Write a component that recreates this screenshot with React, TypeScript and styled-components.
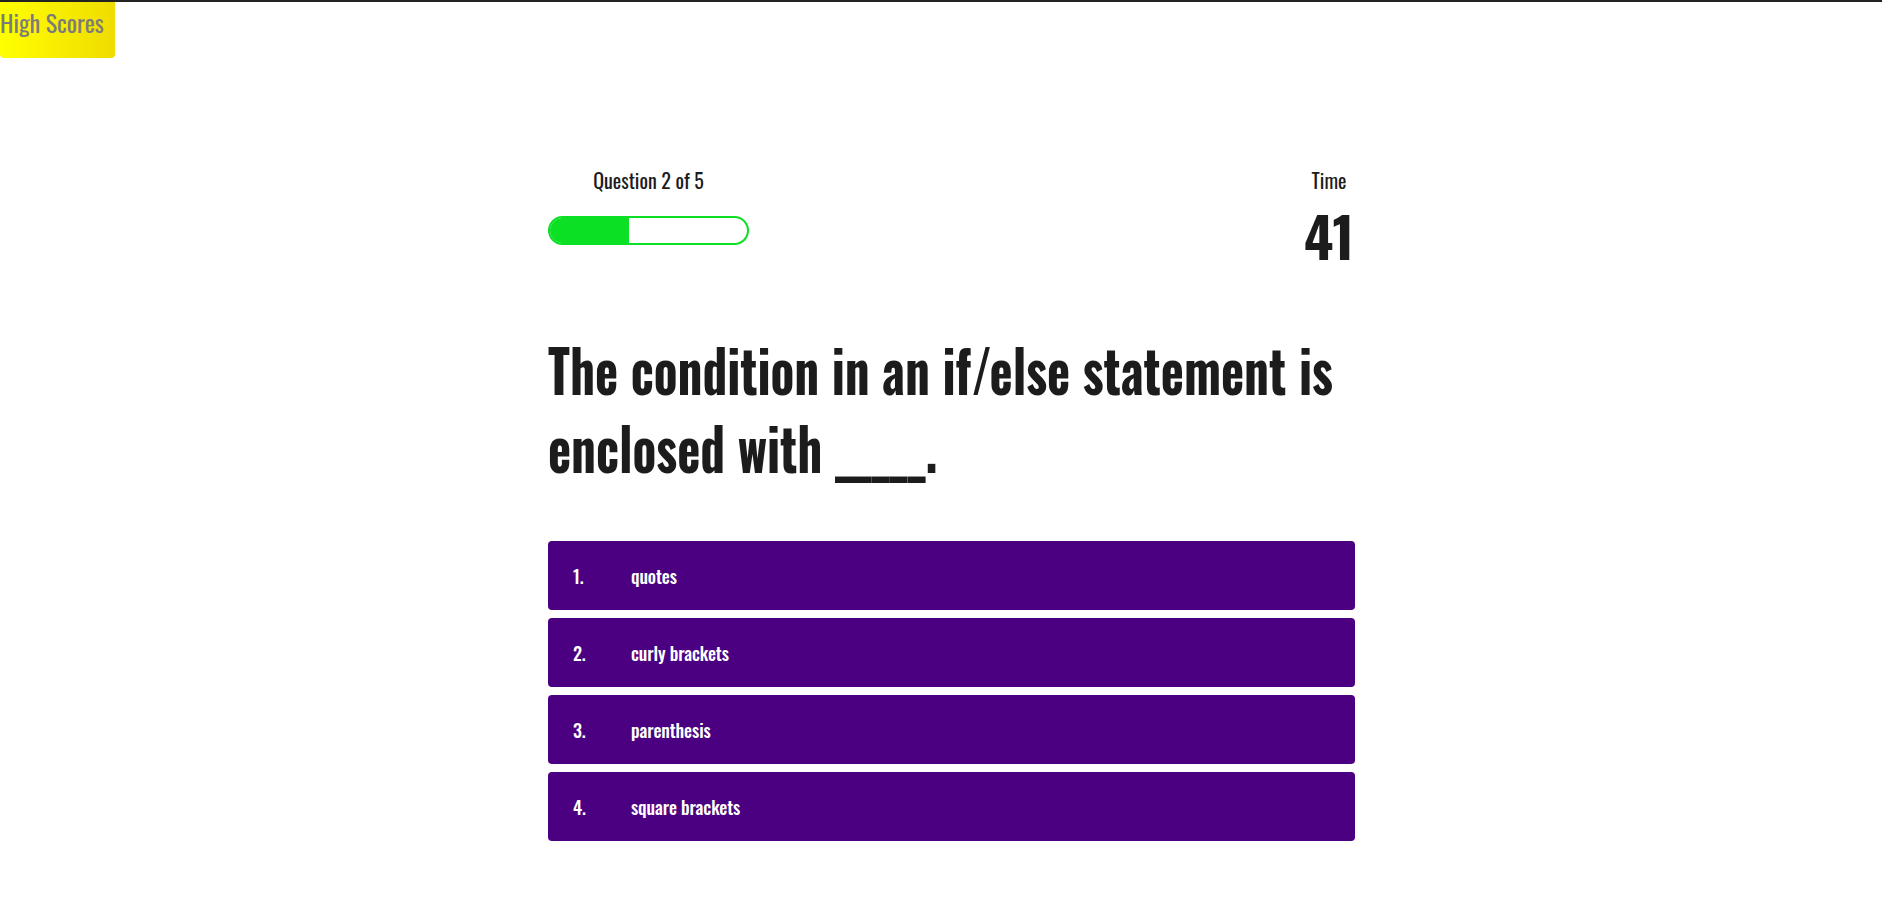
import React from "react";
import styled, { createGlobalStyle } from "styled-components";

// === Global styles ===

const GlobalStyle = createGlobalStyle`
  html, body {
    margin: 0;
    padding: 0;
    background: #ffffff;
  }
  body {
    border-top: 2px solid #222222;
    font-family: "Oswald", "Liberation Sans Narrow", "DejaVu Sans Condensed", sans-serif;
    color: #1c1c1c;
  }
`;

// === Top bar ===

const TopBar = styled.header`
  display: flex;
  align-items: flex-start;
`;

const HighScoresButton = styled.button`
  width: 115px;
  height: 56px;
  padding: 0;
  border: none;
  border-radius: 0 0 4px 4px;
  background: linear-gradient(to right, #ffff00, #f0dc00);
  color: #7b7b7b;
  font-family: inherit;
  font-size: 24px;
  line-height: 40px;
  display: flex;
  align-items: flex-start;
  cursor: pointer;
`;

// === Quiz layout ===

const Page = styled.main`
  display: flex;
  justify-content: center;
  padding: 107px 0 0 21px;
`;

const Quiz = styled.section`
  width: 807px;
  display: flex;
  flex-direction: column;
`;

const StatusRow = styled.div`
  display: flex;
  justify-content: space-between;
  align-items: flex-start;
`;

const ProgressColumn = styled.div`
  display: flex;
  flex-direction: column;
  align-items: center;
  width: 201px;
  gap: 21px;
`;

const Label = styled.div`
  font-size: 20px;
  line-height: 30px;
`;

const ProgressTrack = styled.div`
  width: 100%;
  height: 29px;
  box-sizing: border-box;
  border: 2px solid #0be024;
  border-radius: 16px;
  overflow: hidden;
  background: #ffffff;
`;

const ProgressFill = styled.div`
  height: 100%;
  background: #0be024;
`;

const TimerColumn = styled.div`
  display: flex;
  flex-direction: column;
  align-items: center;
  gap: 10px;
  width: 52px;
`;

const TimeValue = styled.div`
  font-size: 56px;
  font-weight: 700;
  line-height: 60px;
`;

// heading font in the original is narrower than Oswald; squeeze it
const QuestionBox = styled.div`
  margin: 64px 0 56px;
  height: 156px;
`;

const Question = styled.h1`
  margin: 0;
  width: 984px;
  font-size: 60px;
  font-weight: 700;
  line-height: 78px;
  transform: scaleX(0.82);
  transform-origin: left top;
`;

const AnswerList = styled.ol`
  list-style: none;
  margin: 0;
  padding: 0;
  display: flex;
  flex-direction: column;
  gap: 8px;
`;

const AnswerButton = styled.li`
  height: 69px;
  display: flex;
  align-items: center;
  padding: 0 25px;
  border-radius: 4px;
  background: #4b0082;
  color: #ffffff;
  font-size: 18px;
  font-weight: 500;
  letter-spacing: -0.1px;
  cursor: pointer;
`;

const AnswerNumber = styled.span`
  width: 58px;
`;

// === App ===

const answers = ["quotes", "curly brackets", "parenthesis", "square brackets"];

const App: React.FC = () => {
  const current = 2;
  const total = 5;

  return (
    <>
      <GlobalStyle />
      <TopBar>
        <HighScoresButton>High Scores</HighScoresButton>
      </TopBar>
      <Page>
        <Quiz>
          <StatusRow>
            <ProgressColumn>
              <Label>
                Question {current} of {total}
              </Label>
              <ProgressTrack>
                <ProgressFill style={{ width: `${(current / total) * 100}%` }} />
              </ProgressTrack>
            </ProgressColumn>
            <TimerColumn>
              <Label>Time</Label>
              <TimeValue>41</TimeValue>
            </TimerColumn>
          </StatusRow>
          <QuestionBox>
            <Question>The condition in an if/else statement is enclosed with _____.</Question>
          </QuestionBox>
          <AnswerList>
            {answers.map((answer, i) => (
              <AnswerButton key={answer}>
                <AnswerNumber>{i + 1}.</AnswerNumber>
                {answer}
              </AnswerButton>
            ))}
          </AnswerList>
        </Quiz>
      </Page>
    </>
  );
};

export default App;
